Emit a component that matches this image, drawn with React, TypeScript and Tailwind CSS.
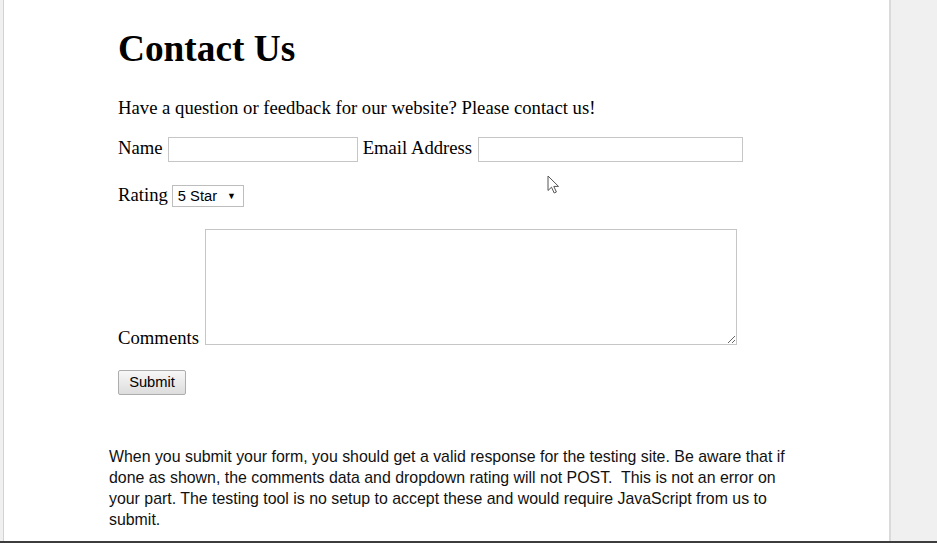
import React from "react";

const serif = "font-['Liberation_Serif','Times_New_Roman',serif]";
const sans = "font-['Liberation_Sans',Arial,sans-serif]";

function Cursor() {
  return (
    <svg
      className="absolute left-[543px] top-[175px]"
      width="13"
      height="19"
      viewBox="0 0 13 19"
    >
      <path
        d="M1 1 L1 15.5 L4.5 12.2 L7.2 18 L9.4 17 L6.8 11.4 L11.5 11.4 Z"
        fill="#fff"
        stroke="#555"
        strokeWidth="1"
        strokeLinejoin="round"
      />
    </svg>
  );
}

export default function App() {
  return (
    <div className="flex h-[543px] w-[937px] overflow-hidden border-b-2 border-[#3d3d3d] bg-white">
      <div className="w-[4px] shrink-0 border-r border-[#d2d3da] bg-[#f0f0f0]" />

      <main className="relative flex-1 pl-[105px] pt-[27px] text-black">
        <div className={`pl-[9px] ${serif}`}>
          <h1 className="text-[37.3px] font-bold leading-[43px]">Contact Us</h1>

          <p className="mt-[27px] text-[18.7px] leading-[22px]">
            Have a question or feedback for our website? Please contact us!
          </p>

          <div className="mt-[18px] flex items-center text-[18.7px] leading-[22px]">
            <span className="-mt-[4px]">Name</span>
            <input
              type="text"
              className="ml-[5px] h-[25px] w-[190px] border border-[#c6c6c6] bg-white px-1 outline-none"
            />
            <span className="-mt-[4px] ml-[5px]">Email Address</span>
            <input
              type="text"
              className="ml-[6px] h-[25px] w-[265px] border border-[#c6c6c6] bg-white px-1 outline-none"
            />
          </div>

          <div className="mt-[23px] flex items-center text-[18.7px] leading-[22px]">
            <span className="-mt-[2px]">Rating</span>
            <div
              className={`ml-[4px] flex h-[22px] w-[72px] items-center justify-between border border-[#bdbdbd] bg-white pl-[5px] pr-[7px] text-[14.7px] ${sans}`}
            >
              <span>5 Star</span>
              <span className="text-[9px] leading-none">▼</span>
            </div>
          </div>

          <div className="mt-[22px] flex items-end text-[18.7px]">
            <span className="leading-[14px]">Comments</span>
            <textarea className="ml-[6px] h-[116px] w-[532px] resize border border-[#c6c6c6] bg-white outline-none" />
          </div>

          <button
            type="button"
            className={`mt-[25px] h-[25px] w-[68px] rounded-[2px] border border-[#adadad] bg-gradient-to-b from-[#f7f7f7] to-[#dddddd] text-[14.7px] ${sans}`}
          >
            Submit
          </button>
        </div>

        <p className={`mt-[51px] w-[690px] whitespace-pre-wrap text-[15.9px] leading-[21px] text-[#111] ${sans}`}>
          {"When you submit your form, you should get a valid response for the testing site. Be aware that if done as shown, the comments data and dropdown rating will not POST.  This is not an error on your part. The testing tool is no setup to accept these and would require JavaScript from us to submit."}
        </p>

        <Cursor />
      </main>

      <div className="w-[48px] shrink-0 border-l-2 border-[#dadada] bg-[#f0f0f0]" />
    </div>
  );
}
